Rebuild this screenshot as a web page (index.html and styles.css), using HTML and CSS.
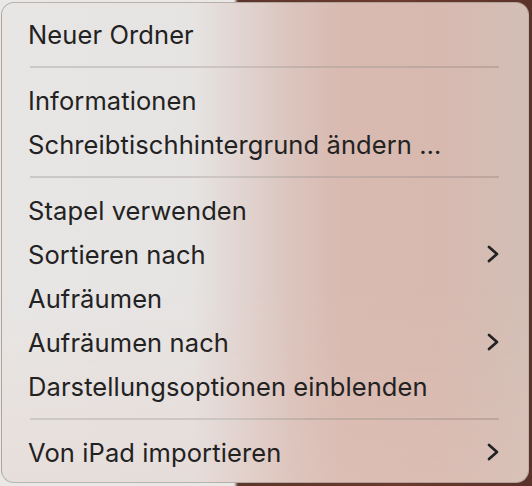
FILE: index.html
```html
<!DOCTYPE html>
<html lang="de">
<head>
<meta charset="utf-8">
<title>Kontextmenü</title>
<link rel="stylesheet" href="styles.css">
</head>
<body>
<div class="menu">
  <div class="item">Neuer Ordner</div>
  <div class="sep"></div>
  <div class="item">Informationen</div>
  <div class="item">Schreibtischhintergrund ändern …</div>
  <div class="sep"></div>
  <div class="item">Stapel verwenden</div>
  <div class="item">Sortieren nach<svg class="chev" viewBox="0 0 12 18" width="12" height="18"><path d="M2 2 L10 9 L2 16" fill="none" stroke="#222" stroke-width="2.7" stroke-linecap="round" stroke-linejoin="round"/></svg></div>
  <div class="item">Aufräumen</div>
  <div class="item">Aufräumen nach<svg class="chev" viewBox="0 0 12 18" width="12" height="18"><path d="M2 2 L10 9 L2 16" fill="none" stroke="#222" stroke-width="2.7" stroke-linecap="round" stroke-linejoin="round"/></svg></div>
  <div class="item">Darstellungsoptionen einblenden</div>
  <div class="sep"></div>
  <div class="item">Von iPad importieren<svg class="chev" viewBox="0 0 12 18" width="12" height="18"><path d="M2 2 L10 9 L2 16" fill="none" stroke="#222" stroke-width="2.7" stroke-linecap="round" stroke-linejoin="round"/></svg></div>
</div>
</body>
</html>
```
FILE: styles.css
```css
html, body {
  margin: 0;
  padding: 0;
  width: 532px;
  height: 486px;
  overflow: hidden;
}
body {
  background: linear-gradient(90deg, #e9e8e7 0, #e9e8e7 234px, #5c362b 238px, #6a3a2e 400px, #5a3229 532px);
  font-family: Inter, "Noto Sans", "Liberation Sans", sans-serif;
}
.menu {
  box-sizing: border-box;
  margin: 2px 0 0 1px;
  width: 528px;
  height: 481px;
  padding: 9px 29px 8px 26px;
  border-radius: 13px;
  border: 1px solid rgba(150, 140, 135, 0.55);
  background:
    linear-gradient(180deg, rgba(255,255,255,0) 0, rgba(255,255,255,0) 60%, rgba(230,200,190,0.25) 100%),
    linear-gradient(90deg, #e7e6e5 0, #e6e4e3 190px, #e1d4d0 240px, #dbc4bd 290px, #d8bab1 340px, #d7b9b0 440px, #d3bfb6 528px);
  display: flex;
  flex-direction: column;
}
.item {
  height: 44px;
  flex: none;
  display: flex;
  align-items: center;
  justify-content: space-between;
  font-size: 25.5px;
  color: #232222;
  letter-spacing: 0.1px;
  white-space: nowrap;
}
.chev {
  display: block;
}
.sep {
  height: 22px;
  flex: none;
  display: flex;
  align-items: center;
  padding-left: 2px;
}
.sep::before {
  content: "";
  display: block;
  width: 473px;
  height: 2px;
  background: linear-gradient(90deg, #cbc8c5 0, #cbc6c3 190px, #c2aea8 280px, #bea59e 473px);
}
```
